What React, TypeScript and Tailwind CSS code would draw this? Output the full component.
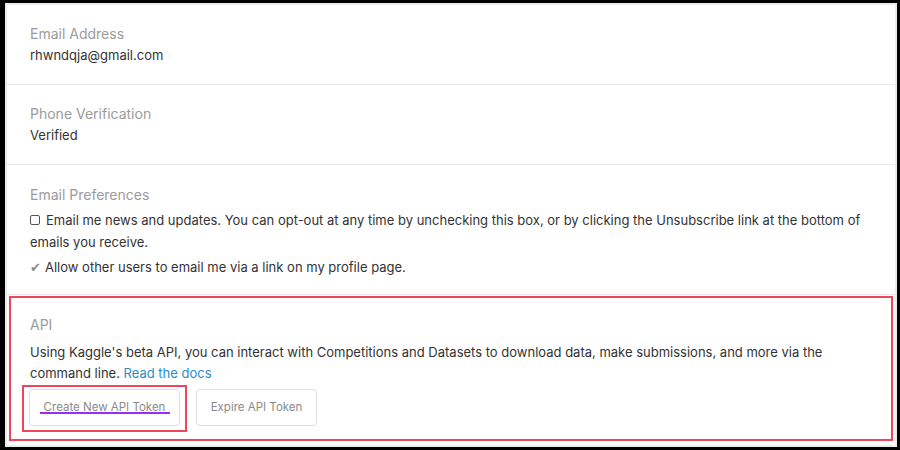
import React from 'react';

const Field: React.FC<{ label: string; value: string }> = ({ label, value }) => (
  <div className="border-b border-[#e8e8e8] pl-[23px] pr-[23px] pt-[18px] pb-[18px]">
    <div className="text-[14px] leading-[21px] text-[#9b9b9b]">{label}</div>
    <div className="mt-[1px] text-[13px] leading-[21px] text-[#333]">{value}</div>
  </div>
);

export default function App() {
  return (
    <div
      className="h-[450px] w-[900px] bg-black pb-[3px] pl-[5px] pr-[3px] pt-[3px]"
      style={{ fontFamily: 'Inter, "Liberation Sans", sans-serif' }}>
      <div className="flex h-full flex-col border-2 border-[#ececec] bg-white">
        <Field label="Email Address" value="rhwndqja@gmail.com" />
        <Field label="Phone Verification" value="Verified" />

        {/* email preferences */}
        <div className="border-b border-[#e8e8e8] pl-[23px] pr-[23px] pt-[19px] pb-[16px]">
          <div className="text-[14px] leading-[21px] text-[#9b9b9b]">Email Preferences</div>
          <p className="mt-[4px] text-[13px] leading-[22px] text-[#333]">
            <span className="mr-[6px] inline-block h-[10px] w-[10px] rounded-[2px] border border-[#555]" />
            Email me news and updates. You can opt-out at any time by unchecking this box, or by
            clicking the Unsubscribe link at the bottom of emails you receive.
          </p>
          <p className="mt-[3px] text-[13px] leading-[22px] text-[#333]">
            <span className="mr-[4px] text-[#8a8a8a]">✔</span>
            Allow other users to email me via a link on my profile page.
          </p>
        </div>

        {/* api */}
        <div className="mx-[2px] mt-[1px] border-2 border-[#f0455a] pl-[19px] pr-[21px] pt-[16px] pb-[7px]">
          <div className="text-[14px] leading-[21px] text-[#9b9b9b]">API</div>
          <p className="mt-[7px] text-[13px] leading-[21px] text-[#333]">
            Using Kaggle's beta API, you can interact with Competitions and Datasets to download
            data, make submissions, and more via the command line.{' '}
            <a className="text-[#2b8dc4]">Read the docs</a>
          </p>
          <div className="mt-[1px] flex items-start">
            <div className="-ml-[8px] border-2 border-[#f0455a] pb-[4px] pl-[5px] pr-[5px] pt-[2px]">
              <button className="relative h-[37px] w-[151px] rounded-[4px] border border-[#dedede] bg-white text-[11.5px] text-[#8a8a8a]">
                Create New API Token
                <span className="absolute left-[10px] right-[9px] top-[22px] h-[2px] bg-[#9b2cf0]" />
              </button>
            </div>
            <button className="ml-[9px] mt-[4px] h-[37px] w-[121px] rounded-[4px] border border-[#dedede] bg-white text-[11.5px] text-[#8a8a8a]">
              Expire API Token
            </button>
          </div>
        </div>
      </div>
    </div>
  );
}
